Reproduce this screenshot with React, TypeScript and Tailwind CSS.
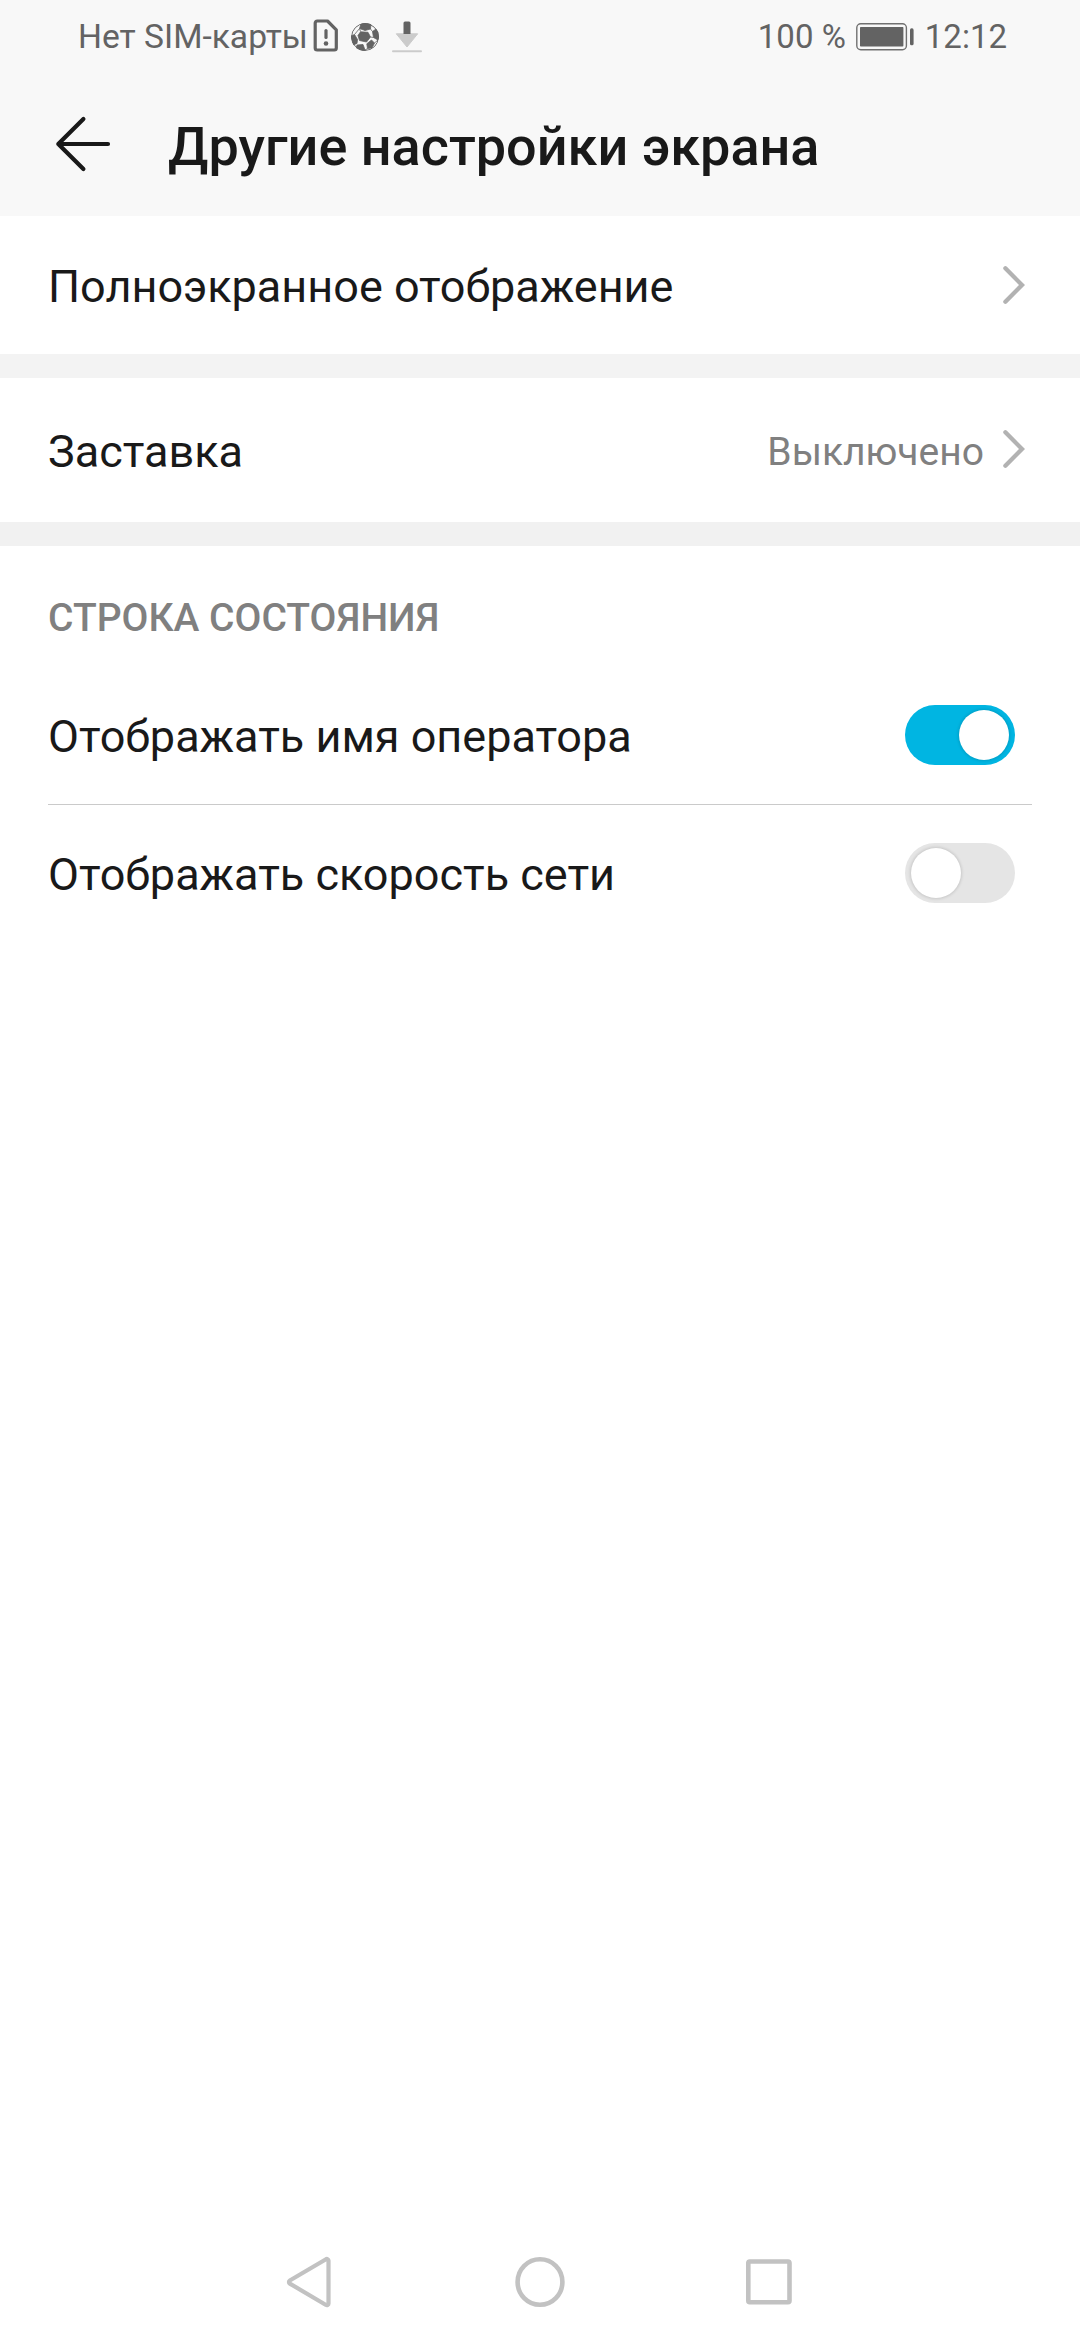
import React from "react";

function SimIcon() {
  return (
    <svg width="26" height="34" viewBox="0 0 26 34" fill="none" stroke="#636363">
      <path d="M4.2 2H14.5L23.3 10.8V29a2 2 0 0 1-2 2H4.2a2 2 0 0 1-2-2V4a2 2 0 0 1 2-2Z" strokeWidth="3.2" strokeLinejoin="round" />
      <path d="M13 11.5V18.5" strokeWidth="3.2" strokeLinecap="round" />
      <circle cx="13" cy="24.5" r="2.3" fill="#636363" stroke="none" />
    </svg>
  );
}

function BallIcon() {
  return (
    <svg width="28" height="28" viewBox="0 0 28 28">
      <defs>
        <clipPath id="ball">
          <circle cx="14" cy="14" r="14" />
        </clipPath>
      </defs>
      <g clipPath="url(#ball)">
        <circle cx="14" cy="14" r="13.5" fill="#f8f8f8" stroke="#636363" />
        <g fill="#636363" stroke="#636363" strokeWidth="0.8">
          <path d="M8.5 5.5L10 1L14-1L20 1L19.5 6L14 7.5Z" />
          <path d="M7 12.5L9.5 8.8L17 9.3L19.5 14L15.5 19L8.5 17.5Z" />
          <path d="M21.5 8.5L25 6L29 11L27 17L22.5 14.5Z" />
          <path d="M0 13L3.5 11.5L6.5 16.5L6 20.5L2 22Z" />
          <path d="M6 22L12 21.5L14 27L10 29L5 26Z" />
          <path d="M15.8 20.8L20.5 17L23.5 20L21 25L16.5 25.5Z" />
        </g>
        <path d="M8.5 5.5L3.5 11.5M19.5 6L21.5 8.5M9.5 8.5L8.5 5.5M22.5 14.5L19.5 14M23.5 20L27 17M16.5 25.5L14 27" fill="none" stroke="#636363" strokeWidth="0.8" />
      </g>
    </svg>
  );
}

function DownloadIcon() {
  return (
    <svg width="30" height="32" viewBox="0 0 30 32">
      <path d="M4.3 12.8H25.7L15 26Z" fill="#cbcbcb" stroke="#cbcbcb" strokeLinejoin="round" />
      <path d="M11.5 2a1.5 1.5 0 0 1 1.5-1.5h4a1.5 1.5 0 0 1 1.5 1.5V13h-7Z" fill="#636363" />
      <rect y="29.3" width="30" height="2" rx="1" fill="#cbcbcb" />
    </svg>
  );
}

function BatteryIcon() {
  return (
    <svg width="58" height="28" viewBox="0 0 58 28">
      <rect x="0.8" y="0.8" width="49.6" height="26" rx="4" fill="none" stroke="#707070" strokeWidth="1.4" />
      <rect x="4" y="4" width="43.4" height="19.6" rx="0.8" fill="#636363" />
      <rect x="54" y="5.3" width="3.6" height="17" rx="1.6" fill="#636363" />
    </svg>
  );
}

function Chevron() {
  return (
    <svg className="shrink-0" width="22" height="38" viewBox="0 0 22 38" fill="none">
      <path d="M2.4 2.3L19 19L2.4 35.7" stroke="#b2b2b2" strokeWidth="4.3" strokeLinecap="round" />
    </svg>
  );
}

function Toggle({ on }: { on: boolean }) {
  return (
    <div
      className={
        on
          ? "flex h-[60px] w-[110px] items-center justify-end rounded-full bg-[#00b5e2] pr-[6px]"
          : "flex h-[60px] w-[110px] items-center rounded-full bg-[#e5e5e5] pl-[6px]"
      }
    >
      <div className="size-[50px] rounded-full bg-white shadow-[0_0_3px_1px_rgba(0,0,0,0.13)]" />
    </div>
  );
}

export default function App() {
  return (
    <div className="flex h-[2340px] w-[1080px] flex-col bg-white font-['Roboto',sans-serif] text-[45px] leading-[54px] text-[#191919]">
      <header className="h-[216px] bg-[#f8f8f8]">
        <div className="flex h-[75px] items-center pl-[78px] pr-[73px] text-[33px] leading-[40px] text-[#636363]">
          <span className="-mt-[2px] text-[33.6px]">Нет SIM-карты</span>
          <div className="ml-[5px] -mt-[4px]"><SimIcon /></div>
          <div className="ml-[12px] -mt-px"><BallIcon /></div>
          <div className="ml-[13px] -mt-[2px]"><DownloadIcon /></div>
          <span className="-mt-px ml-auto">100 %</span>
          <div className="ml-[10px] -mt-[2px]"><BatteryIcon /></div>
          <span className="-mt-px ml-[11px]">12:12</span>
        </div>
        <div className="flex h-[138px] items-center pl-[55px]">
          <svg width="56" height="56" viewBox="0 0 56 56" fill="none" stroke="#191919" strokeWidth="4.2" strokeLinecap="round" strokeLinejoin="round">
            <path d="M28.4 3.1L3.3 28L28.4 53M3.3 28H53" />
          </svg>
          <h1 className="ml-[57px] pt-[5px] text-[54px] leading-[64px] font-medium">Другие настройки экрана</h1>
        </div>
      </header>
      <main className="flex flex-1 flex-col">
        <div className="flex h-[138px] items-center justify-between pr-[55px] pl-[48px]">
          <span className="pt-[4px]">Полноэкранное отображение</span>
          <Chevron />
        </div>
        <div className="h-[24px] bg-[#f3f3f3]" />
        <div className="flex h-[144px] items-center pr-[55px] pl-[48px]">
          <span className="pt-[4px]">Заставка</span>
          <span className="ml-auto pt-[3px] text-[39px] text-[#808080]">Выключено</span>
          <div className="-mt-[3px] ml-[19px]"><Chevron /></div>
        </div>
        <div className="h-[24px] bg-[#f1f1f1]" />
        <h2 className="flex h-[120px] items-end pb-[21px] pl-[48px] text-[39px] font-medium text-[#808080]">СТРОКА СОСТОЯНИЯ</h2>
        <div className="mr-[48px] ml-[48px] flex h-[139px] items-center justify-between border-b border-[#cacaca] pr-[17px]">
          <span className="pt-[3px]">Отображать имя оператора</span>
          <Toggle on />
        </div>
        <div className="mr-[48px] ml-[48px] flex h-[136px] items-center justify-between pr-[17px]">
          <span className="pt-[3px]">Отображать скорость сети</span>
          <Toggle on={false} />
        </div>
      </main>
      <nav className="flex h-[117px] items-center justify-between pr-[286px] pl-[286px]">
        <svg width="46" height="52" viewBox="0 0 46 52" fill="none">
          <path d="M40 3.2L3.8 24.5a1.8 1.8 0 0 0 0 3.1L40 49a1.7 1.7 0 0 0 2.5-1.5V4.6a1.7 1.7 0 0 0-2.5-1.4Z" stroke="#c2c2c2" strokeWidth="4.2" />
        </svg>
        <svg width="50" height="52" viewBox="0 0 50 52" fill="none">
          <ellipse cx="25" cy="26" rx="22.4" ry="22.8" stroke="#c2c2c2" strokeWidth="4.6" />
        </svg>
        <svg className="overflow-visible" width="46" height="52" viewBox="0 0 46 52" fill="none">
          <rect x="0.3" y="5.5" width="41.2" height="40.8" rx="1.5" stroke="#c2c2c2" strokeWidth="4.6" />
        </svg>
      </nav>
    </div>
  );
}
